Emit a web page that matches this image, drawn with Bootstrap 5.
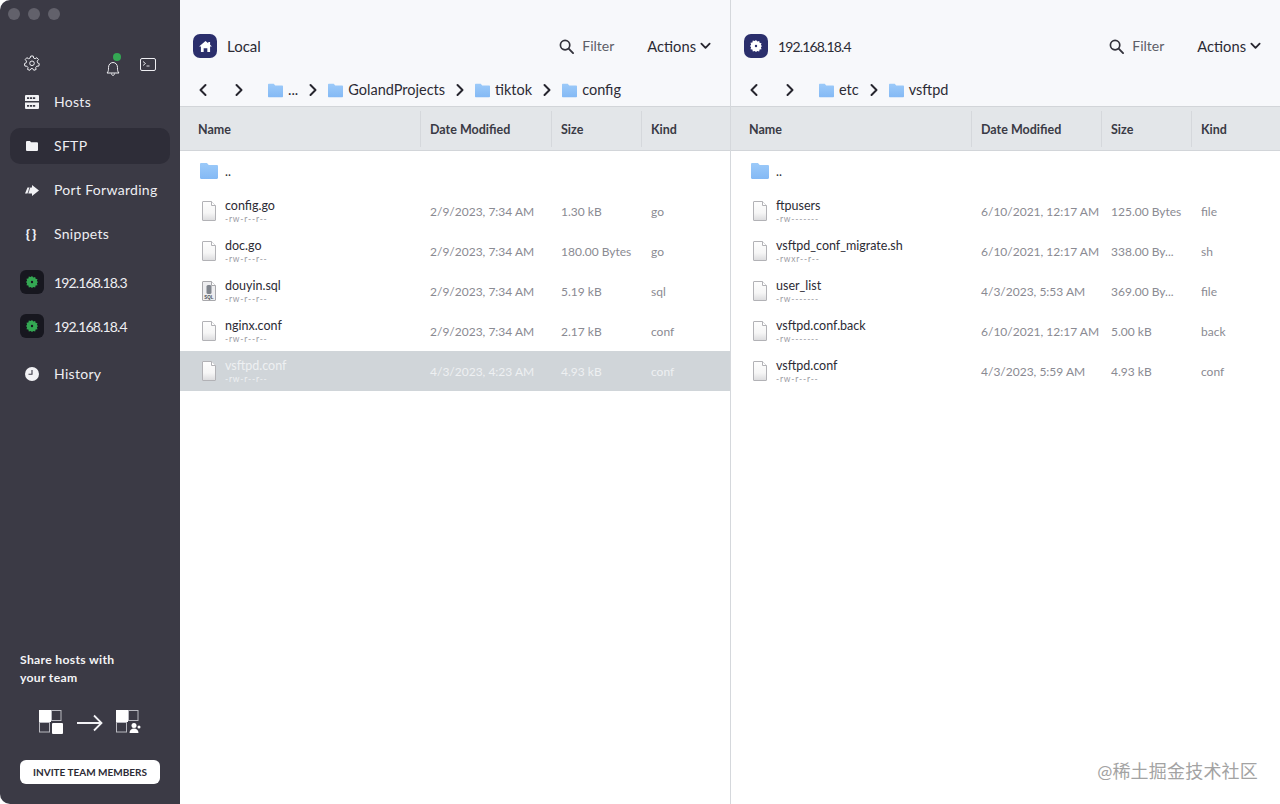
<!DOCTYPE html>
<html lang="en">

<head>
    <meta charset="UTF-8">
    <meta name="viewport" content="width=device-width, initial-scale=1.0">
    <link href="https://cdn.jsdelivr.net/npm/bootstrap@5.3.2/dist/css/bootstrap.min.css" rel="stylesheet">
    <script src="https://cdn.jsdelivr.net/npm/bootstrap@5.3.2/dist/js/bootstrap.bundle.min.js"></script>
    <title>SFTP</title>
    <style>
        html, body {
            height: 804px;
            overflow: hidden;
            background-color: #ffffff;
            font-family: "Lato", "Noto Sans CJK SC", sans-serif;
        }

        .app-window {
            width: 1280px;
            height: 804px;
            position: relative;
        }

        .side-bar {
            width: 180px;
            flex: none;
            background-color: #3b3a45;
            color: #eeeef2;
            border-radius: 10px 0 0 10px;
        }

        .traffic-row {
            height: 28px;
            padding: 8px 0 0 8px;
            gap: 8px;
        }

        .traffic-dot {
            width: 12px;
            height: 12px;
            border-radius: 50%;
            background-color: #62616b;
        }

        .tool-row {
            height: 52px;
            padding: 27px 24px 0 24px;
        }

        .bell-wrap {
            position: relative;
            width: 14px;
            height: 16px;
            margin-right: 20px;
        }

        .bell-dot {
            position: absolute;
            top: -2px;
            right: -1px;
            width: 8px;
            height: 8px;
            border-radius: 50%;
            background-color: #34a853;
        }

        .term-ico {
            margin-top: 3px;
        }

        .side-item {
            height: 36px;
            margin: 0 10px 8px;
            padding-left: 14px;
            border-radius: 10px;
            font-size: 14px;
            letter-spacing: .3px;
            gap: 14px;
        }

        .side-item > span:last-child {
            margin-top: -2px;
        }

        .side-item.is-active {
            background-color: #2e2d38;
        }

        .side-ico {
            width: 16px;
            flex: none;
            display: flex;
            justify-content: center;
        }

        .brace-ico {
            font-size: 14px;
            font-weight: 900;
            letter-spacing: 2px;
            line-height: 1;
        }

        .host-item {
            padding-left: 10px;
            gap: 10px;
        }

        .host-item > span:last-child {
            margin-top: 0;
            letter-spacing: -.85px;
        }

        .host-ico {
            width: 24px;
            height: 24px;
            flex: none;
            border-radius: 6px;
            background-color: #17171f;
            display: flex;
            align-items: center;
            justify-content: center;
        }

        .gear-green {
            --gear-hole: #17171f;
            color: #34a853;
        }

        .gear-white {
            --gear-hole: #2b2f6c;
            color: #ffffff;
        }

        .share-title {
            font-size: 12.2px;
            font-weight: 700;
            line-height: 18px;
            letter-spacing: .3px;
            color: #f4f4f6;
            padding-left: 20px;
        }

        .share-art {
            gap: 13px;
            margin: 23px 0 25px;
        }

        .invite-btn {
            display: block;
            width: 140px;
            height: 24px;
            margin: 0 0 20px 20px;
            padding: 0;
            border: 0;
            border-radius: 6px;
            background-color: #ffffff;
            color: #2c2b35;
            font-size: 10px;
            font-weight: 700;
            line-height: 24px;
            text-align: center;
        }

        .pane-left {
            width: 551px;
            flex: none;
            border-right: 1px solid #d5d8dc;
        }

        .pane-right {
            flex: 1;
        }

        .pane-head {
            height: 106px;
            background-color: #f7f8fb;
            border-bottom: 1px solid #d2d5d9;
            box-sizing: content-box;
        }

        .title-row {
            height: 34px;
            padding-top: 29px;
            box-sizing: content-box;
            padding-left: 13px;
            padding-right: 19px;
            color: #2c2b35;
            font-size: 15px;
        }

        .ip-title {
            font-size: 14px;
            letter-spacing: -.85px;
        }

        .pane-badge {
            width: 24px;
            height: 24px;
            border-radius: 7px;
            background-color: #2b2f6c;
            display: flex;
            align-items: center;
            justify-content: center;
            margin-right: 10px;
        }

        .filter-btn {
            color: #5e5e68;
            margin-right: 33px;
            gap: 8px;
            font-size: 14px;
            line-height: 18px;
        }

        .actions-btn {
            gap: 4px;
            font-size: 14.7px;
        }

        .crumb-row {
            height: 28px;
            margin-top: 13px;
            padding-left: 18px;
            font-size: 14.5px;
            color: #2c2b35;
        }

        .nav-arrows {
            width: 70px;
            gap: 26px;
        }

        .crumb-sep {
            margin: 0 10px;
        }

        .crumb-name {
            margin-left: 5px;
        }

        .col-heads {
            height: 44px;
            background-color: #e3e6e9;
            border-bottom: 1px solid #d2d5d9;
            font-size: 12.5px;
            font-weight: 700;
            color: #3a3a45;
        }

        .c-name, .c-date, .c-size, .c-kind {
            flex: none;
            padding-left: 9px;
            white-space: nowrap;
            overflow: hidden;
        }

        .c-name { width: 241px; padding-left: 0; }
        .c-date { width: 130px; }
        .c-size { width: 90px; }
        .c-kind { flex: 1; }

        .pane-left .c-date { width: 131px; }

        .col-heads .c-name { padding-left: 18px; }

        .col-heads > div {
            height: 36px;
            line-height: 37px;
            border-right: 1px solid #d5d8dc;
        }

        .col-heads > div:last-child {
            border-right: 0;
        }

        .file-row {
            height: 40px;
            font-size: 12px;
            color: #8a8a92;
        }

        .file-row .c-name {
            padding-left: 20px;
            gap: 7px;
        }

        .file-row .c-date, .file-row .c-size, .file-row .c-kind {
            padding-top: 2px;
        }

        .doc-ico {
            margin: 0 2px;
        }

        .file-row.is-selected {
            background-color: #d0d5d9;
            color: #eef0f2;
        }

        .file-row.is-selected .file-name,
        .file-row.is-selected .file-perm {
            color: #eef0f2;
        }

        .file-name {
            font-size: 12.5px;
            line-height: 14px;
            margin-top: 2px;
            color: #2c2b35;
        }

        .file-perm {
            font-size: 8.5px;
            line-height: 11px;
            margin-top: 1px;
            letter-spacing: .8px;
            color: #9a9aa2;
        }

        .water-mark {
            position: absolute;
            right: 22px;
            top: 759px;
            font-size: 18px;
            line-height: 24px;
            letter-spacing: .2px;
            color: #a3a3a3;
        }
    </style>

</head>

<body>

    <svg width="0" height="0" class="position-absolute">
        <defs>
            <linearGradient id="doc-fill" x1="0" y1="0" x2="0" y2="1">
                <stop offset="0" stop-color="#fdfdfd"/>
                <stop offset=".6" stop-color="#f6f6f6"/>
                <stop offset="1" stop-color="#dcdcde"/>
            </linearGradient>
            <linearGradient id="folder-fill" x1="0" y1="0" x2="0" y2="1">
                <stop offset="0" stop-color="#9ccaf9"/>
                <stop offset="1" stop-color="#84b9f5"/>
            </linearGradient>
            <symbol id="folder" viewBox="0 0 18 16">
                <path d="M0 1.200C0 .5.5 0 1.200 0h5.200c.4 0 .7.2 1 .4l1.300 1.500h8.100c.7 0 1.200.5 1.200 1.200v11.700c0 .7-.5 1.200-1.200 1.200H1.200C.5 16 0 15.500 0 14.800z" fill="url(#folder-fill)"/>
            </symbol>
            <symbol id="doc" viewBox="0 0 14 20">
                <path d="M1 .5h8.500l4 4V19a.5.500 0 0 1-.5.500H1a.5.500 0 0 1-.5-.5V1A.5.500 0 0 1 1 .5z" fill="url(#doc-fill)" stroke="#b2b2b6"/>
                <path d="M9.500.5v4h4" fill="#fff" stroke="#b2b2b6"/>
            </symbol>
            <symbol id="sqldoc" viewBox="0 0 14 20">
                <path d="M1 .5h8.500l4 4V19a.5.500 0 0 1-.5.500H1a.5.500 0 0 1-.5-.5V1A.5.500 0 0 1 1 .5z" fill="#eeeef0" stroke="#a8a8ac"/>
                <path d="M9.500.5v4h4" fill="#fff" stroke="#a8a8ac"/>
                <rect x="4.500" y="4" width="5" height="9" rx="1.500" fill="#80858d"/>
                <text x="7" y="18" text-anchor="middle" font-size="4.500" font-family="Liberation Sans" font-weight="700" fill="#4a4f58">SQL</text>
            </symbol>
            <symbol id="chev-l" viewBox="0 0 10 14">
                <path d="M7.500 2 2.500 7l5 5" fill="none" stroke="#26252e" stroke-width="2" stroke-linecap="round" stroke-linejoin="round"/>
            </symbol>
            <symbol id="chev-r" viewBox="0 0 10 14">
                <path d="M2.500 2l5 5-5 5" fill="none" stroke="#26252e" stroke-width="2" stroke-linecap="round" stroke-linejoin="round"/>
            </symbol>
            <symbol id="search" viewBox="0 0 16 16">
                <circle cx="6.500" cy="6.500" r="5" fill="none" stroke="#33323c" stroke-width="1.800"/>
                <path d="M10.300 10.300 15 15" stroke="#33323c" stroke-width="2" stroke-linecap="round"/>
            </symbol>
            <symbol id="chev-d" viewBox="0 0 12 8">
                <path d="M1.500 1.500 6 6l4.500-4.500" fill="none" stroke="#26252e" stroke-width="2" stroke-linecap="round" stroke-linejoin="round"/>
            </symbol>
            <symbol id="gear-fill" viewBox="0 0 12 12">
                <path d="M6 0l1.300 1.500 1.900-.6.400 1.900 1.900.4-.6 1.900L12 6l-1.100 1.300.6 1.900-1.900.4-.4 1.900-1.900-.6L6 12l-1.300-1.100-1.900.6-.4-1.900-1.900-.4.6-1.900L0 6l1.100-1.300-.6-1.900 1.900-.4.4-1.900 1.900.6z" fill="currentColor"/>
                <circle cx="6" cy="6" r="1.200" fill="var(--gear-hole)"/>
            </symbol>
        </defs>
    </svg>

    <div class="app-window d-flex">
        <aside class="side-bar d-flex flex-column">
            <div class="traffic-row d-flex">
                <span class="traffic-dot"></span>
                <span class="traffic-dot"></span>
                <span class="traffic-dot"></span>
            </div>
            <div class="tool-row d-flex align-items-start justify-content-between">
                <svg width="16" height="16" viewBox="0 0 16 16">
                    <path d="M6.800 1h2.400l.4 2 1.500.7 1.800-1 1.600 1.900-1.300 1.500.3 1.700 1.800.9-.5 2.400-2 .1-1.100 1.300.4 2-2.300.8-1.100-1.700H7l-1.100 1.700-2.300-.8.4-2-1.100-1.300-2-.1-.5-2.400 1.800-.9.300-1.700L1.200 4.600 2.800 2.700l1.800 1 1.500-.7z" fill="none" stroke="#eeeef2" stroke-width="1" stroke-linejoin="round"/>
                    <circle cx="8" cy="8.300" r="2.300" fill="none" stroke="#eeeef2"/>
                </svg>
                <div class="d-flex align-items-start">
                    <div class="bell-wrap">
                        <svg width="14" height="16" viewBox="0 1 14 16">
                            <path d="M1 13c1.500-1.500 1.500-3 1.500-5.500C2.500 4.500 4.500 2.500 7 2.500s4.500 2 4.500 5c0 2.500 0 4 1.500 5.500zM5.500 13.500c0 2.500 3 2.500 3 0" fill="none" stroke="#eeeef2" stroke-width="1" stroke-linejoin="round"/>
                        </svg>
                        <span class="bell-dot"></span>
                    </div>
                    <svg width="16" height="13" viewBox="0 0 16 13" class="term-ico">
                        <rect x=".5" y=".5" width="15" height="12" rx="1.500" fill="none" stroke="#eeeef2"/>
                        <path d="M3 3.500l2.500 2L3 7.500M6.500 8h3" fill="none" stroke="#eeeef2" stroke-width=".9"/>
                    </svg>
                </div>
            </div>

            <div class="side-item d-flex align-items-center mt-1">
                <span class="side-ico">
                    <svg width="14" height="14" viewBox="0 0 14 14">
                        <path d="M1 0h12a1 1 0 0 1 1 1v5H0V1a1 1 0 0 1 1-1zM0 7.500h14V13a1 1 0 0 1-1 1H1a1 1 0 0 1-1-1z" fill="#f2f2f5"/>
                        <path d="M2 2.200h2.200v1.800H2zM5 2.200h2.200v1.800H5zM8 2.200h2.200v1.800H8zM2 10h2.200v1.800H2zM5 10h2.200v1.800H5zM8 10h2.200v1.800H8z" fill="#3b3a45"/>
                    </svg>
                </span>
                <span>Hosts</span>
            </div>
            <div class="side-item is-active d-flex align-items-center">
                <span class="side-ico">
                    <svg width="12" height="10" viewBox="0 0 12 10">
                        <path d="M0 1a1 1 0 0 1 1-1h3l1 1.300h6a1 1 0 0 1 1 1V9a1 1 0 0 1-1 1H1a1 1 0 0 1-1-1z" fill="#f2f2f5"/>
                    </svg>
                </span>
                <span>SFTP</span>
            </div>
            <div class="side-item d-flex align-items-center">
                <span class="side-ico">
                    <svg width="14" height="11" viewBox="0 0 14 11">
                        <path d="M2.500 2.500H7V0l7 5.500L7 11V8.500H0z" fill="#f2f2f5"/>
                        <path d="M5 2 2.800 9" stroke="#3b3a45" stroke-width=".8"/>
                    </svg>
                </span>
                <span>Port Forwarding</span>
            </div>
            <div class="side-item d-flex align-items-center">
                <span class="side-ico brace-ico">{}</span>
                <span>Snippets</span>
            </div>

            <div class="side-item host-item d-flex align-items-center mt-1">
                <span class="host-ico">
                    <svg width="12" height="12" class="gear-green"><use href="#gear-fill"/></svg>
                </span>
                <span>192.168.18.3</span>
            </div>
            <div class="side-item host-item d-flex align-items-center">
                <span class="host-ico">
                    <svg width="12" height="12" class="gear-green"><use href="#gear-fill"/></svg>
                </span>
                <span>192.168.18.4</span>
            </div>
            <div class="side-item d-flex align-items-center mt-1">
                <span class="side-ico">
                    <svg width="14" height="14" viewBox="0 0 14 14">
                        <circle cx="7" cy="7" r="7" fill="#f2f2f5"/>
                        <path d="M7 3v4.300H3.500" fill="none" stroke="#3b3a45" stroke-width="1.100"/>
                    </svg>
                </span>
                <span>History</span>
            </div>

            <div class="mt-auto">
                <div class="share-title">Share hosts with<br>your team</div>
                <div class="share-art d-flex justify-content-center align-items-center">
                    <svg width="25" height="25" viewBox="0 0 25 25">
                        <rect x="0" y="0" width="12" height="12" fill="#fff"/>
                        <rect x="12.500" y=".5" width="9.500" height="10" fill="none" stroke="#b9b9c0"/>
                        <rect x=".5" y="12.500" width="10" height="9.500" fill="none" stroke="#b9b9c0"/>
                        <rect x="13" y="13" width="11" height="11" rx="1" fill="#fff"/>
                    </svg>
                    <svg width="26" height="18" viewBox="0 0 26 18">
                        <path d="M0 9h24.500M17 1.500 24.500 9 17 16.500" fill="none" stroke="#f2f2f5" stroke-width="1.800"/>
                    </svg>
                    <svg width="25" height="25" viewBox="0 0 25 25">
                        <rect x="0" y="0" width="12" height="12" fill="#fff"/>
                        <rect x="12.500" y=".5" width="9.500" height="10" fill="none" stroke="#b9b9c0"/>
                        <rect x=".5" y="12.500" width="10" height="9.500" fill="none" stroke="#b9b9c0"/>
                        <circle cx="18" cy="15.500" r="2.500" fill="#fff"/>
                        <path d="M13.500 23c0-3 2-4.500 4.500-4.500s4.500 1.500 4.500 4.500z" fill="#fff"/>
                        <circle cx="23" cy="17" r="1.500" fill="#fff"/>
                    </svg>
                </div>
                <button type="button" class="invite-btn">INVITE TEAM MEMBERS</button>
            </div>
        </aside>

        <section class="pane-left d-flex flex-column">
            <div class="pane-head">
                <div class="title-row d-flex align-items-center">
                    <span class="pane-badge">
                        <svg width="13" height="11" viewBox="0 0 14 12">
                            <path d="M7 0l3 2.500V1h2v3.200L14 6h-2v6H9V8H5v4H2V6H0z" fill="#fff"/>
                        </svg>
                    </span>
                    <span>Local</span>
                    <div class="filter-btn d-flex align-items-center ms-auto">
                        <svg width="15" height="15"><use href="#search"/></svg>
                        <span>Filter</span>
                    </div>
                    <div class="actions-btn d-flex align-items-center">
                        <span>Actions</span>
                        <svg width="11" height="8"><use href="#chev-d"/></svg>
                    </div>
                </div>
                <div class="crumb-row d-flex align-items-center">
                    <div class="nav-arrows d-flex">
                        <svg width="10" height="14"><use href="#chev-l"/></svg>
                        <svg width="10" height="14"><use href="#chev-r"/></svg>
                    </div>
                    <svg width="15" height="15"><use href="#folder"/></svg>
                    <span class="crumb-name">...</span>
                    <svg width="10" height="14" class="crumb-sep"><use href="#chev-r"/></svg>
                    <svg width="15" height="15"><use href="#folder"/></svg>
                    <span class="crumb-name">GolandProjects</span>
                    <svg width="10" height="14" class="crumb-sep"><use href="#chev-r"/></svg>
                    <svg width="15" height="15"><use href="#folder"/></svg>
                    <span class="crumb-name">tiktok</span>
                    <svg width="10" height="14" class="crumb-sep"><use href="#chev-r"/></svg>
                    <svg width="15" height="15"><use href="#folder"/></svg>
                    <span class="crumb-name">config</span>
                </div>
            </div>
            <div class="col-heads d-flex align-items-center">
                <div class="c-name">Name</div>
                <div class="c-date">Date Modified</div>
                <div class="c-size">Size</div>
                <div class="c-kind">Kind</div>
            </div>
            <div class="file-row d-flex align-items-center">
                <div class="c-name d-flex align-items-center">
                    <svg width="18" height="16"><use href="#folder"/></svg>
                    <span class="file-name">..</span>
                </div>
            </div>
            <div class="file-row d-flex align-items-center">
                <div class="c-name d-flex align-items-center">
                    <svg width="14" height="20" class="doc-ico"><use href="#doc"/></svg>
                    <div><div class="file-name">config.go</div><div class="file-perm">-rw-r--r--</div></div>
                </div>
                <div class="c-date">2/9/2023, 7:34 AM</div>
                <div class="c-size">1.30 kB</div>
                <div class="c-kind">go</div>
            </div>
            <div class="file-row d-flex align-items-center">
                <div class="c-name d-flex align-items-center">
                    <svg width="14" height="20" class="doc-ico"><use href="#doc"/></svg>
                    <div><div class="file-name">doc.go</div><div class="file-perm">-rw-r--r--</div></div>
                </div>
                <div class="c-date">2/9/2023, 7:34 AM</div>
                <div class="c-size">180.00 Bytes</div>
                <div class="c-kind">go</div>
            </div>
            <div class="file-row d-flex align-items-center">
                <div class="c-name d-flex align-items-center">
                    <svg width="14" height="20" class="doc-ico"><use href="#sqldoc"/></svg>
                    <div><div class="file-name">douyin.sql</div><div class="file-perm">-rw-r--r--</div></div>
                </div>
                <div class="c-date">2/9/2023, 7:34 AM</div>
                <div class="c-size">5.19 kB</div>
                <div class="c-kind">sql</div>
            </div>
            <div class="file-row d-flex align-items-center">
                <div class="c-name d-flex align-items-center">
                    <svg width="14" height="20" class="doc-ico"><use href="#doc"/></svg>
                    <div><div class="file-name">nginx.conf</div><div class="file-perm">-rw-r--r--</div></div>
                </div>
                <div class="c-date">2/9/2023, 7:34 AM</div>
                <div class="c-size">2.17 kB</div>
                <div class="c-kind">conf</div>
            </div>
            <div class="file-row is-selected d-flex align-items-center">
                <div class="c-name d-flex align-items-center">
                    <svg width="14" height="20" class="doc-ico"><use href="#doc"/></svg>
                    <div><div class="file-name">vsftpd.conf</div><div class="file-perm">-rw-r--r--</div></div>
                </div>
                <div class="c-date">4/3/2023, 4:23 AM</div>
                <div class="c-size">4.93 kB</div>
                <div class="c-kind">conf</div>
            </div>
        </section>

        <section class="pane-right d-flex flex-column">
            <div class="pane-head">
                <div class="title-row d-flex align-items-center">
                    <span class="pane-badge">
                        <svg width="12" height="12" class="gear-white"><use href="#gear-fill"/></svg>
                    </span>
                    <span class="ip-title">192.168.18.4</span>
                    <div class="filter-btn d-flex align-items-center ms-auto">
                        <svg width="15" height="15"><use href="#search"/></svg>
                        <span>Filter</span>
                    </div>
                    <div class="actions-btn d-flex align-items-center">
                        <span>Actions</span>
                        <svg width="11" height="8"><use href="#chev-d"/></svg>
                    </div>
                </div>
                <div class="crumb-row d-flex align-items-center">
                    <div class="nav-arrows d-flex">
                        <svg width="10" height="14"><use href="#chev-l"/></svg>
                        <svg width="10" height="14"><use href="#chev-r"/></svg>
                    </div>
                    <svg width="15" height="15"><use href="#folder"/></svg>
                    <span class="crumb-name">etc</span>
                    <svg width="10" height="14" class="crumb-sep"><use href="#chev-r"/></svg>
                    <svg width="15" height="15"><use href="#folder"/></svg>
                    <span class="crumb-name">vsftpd</span>
                </div>
            </div>
            <div class="col-heads d-flex align-items-center">
                <div class="c-name">Name</div>
                <div class="c-date">Date Modified</div>
                <div class="c-size">Size</div>
                <div class="c-kind">Kind</div>
            </div>
            <div class="file-row d-flex align-items-center">
                <div class="c-name d-flex align-items-center">
                    <svg width="18" height="16"><use href="#folder"/></svg>
                    <span class="file-name">..</span>
                </div>
            </div>
            <div class="file-row d-flex align-items-center">
                <div class="c-name d-flex align-items-center">
                    <svg width="14" height="20" class="doc-ico"><use href="#doc"/></svg>
                    <div><div class="file-name">ftpusers</div><div class="file-perm">-rw-------</div></div>
                </div>
                <div class="c-date">6/10/2021, 12:17 AM</div>
                <div class="c-size">125.00 Bytes</div>
                <div class="c-kind">file</div>
            </div>
            <div class="file-row d-flex align-items-center">
                <div class="c-name d-flex align-items-center">
                    <svg width="14" height="20" class="doc-ico"><use href="#doc"/></svg>
                    <div><div class="file-name">vsftpd_conf_migrate.sh</div><div class="file-perm">-rwxr--r--</div></div>
                </div>
                <div class="c-date">6/10/2021, 12:17 AM</div>
                <div class="c-size">338.00 By...</div>
                <div class="c-kind">sh</div>
            </div>
            <div class="file-row d-flex align-items-center">
                <div class="c-name d-flex align-items-center">
                    <svg width="14" height="20" class="doc-ico"><use href="#doc"/></svg>
                    <div><div class="file-name">user_list</div><div class="file-perm">-rw-------</div></div>
                </div>
                <div class="c-date">4/3/2023, 5:53 AM</div>
                <div class="c-size">369.00 By...</div>
                <div class="c-kind">file</div>
            </div>
            <div class="file-row d-flex align-items-center">
                <div class="c-name d-flex align-items-center">
                    <svg width="14" height="20" class="doc-ico"><use href="#doc"/></svg>
                    <div><div class="file-name">vsftpd.conf.back</div><div class="file-perm">-rw-------</div></div>
                </div>
                <div class="c-date">6/10/2021, 12:17 AM</div>
                <div class="c-size">5.00 kB</div>
                <div class="c-kind">back</div>
            </div>
            <div class="file-row d-flex align-items-center">
                <div class="c-name d-flex align-items-center">
                    <svg width="14" height="20" class="doc-ico"><use href="#doc"/></svg>
                    <div><div class="file-name">vsftpd.conf</div><div class="file-perm">-rw-r--r--</div></div>
                </div>
                <div class="c-date">4/3/2023, 5:59 AM</div>
                <div class="c-size">4.93 kB</div>
                <div class="c-kind">conf</div>
            </div>
        </section>

        <div class="water-mark">@稀土掘金技术社区</div>
    </div>

</body>

</html>
